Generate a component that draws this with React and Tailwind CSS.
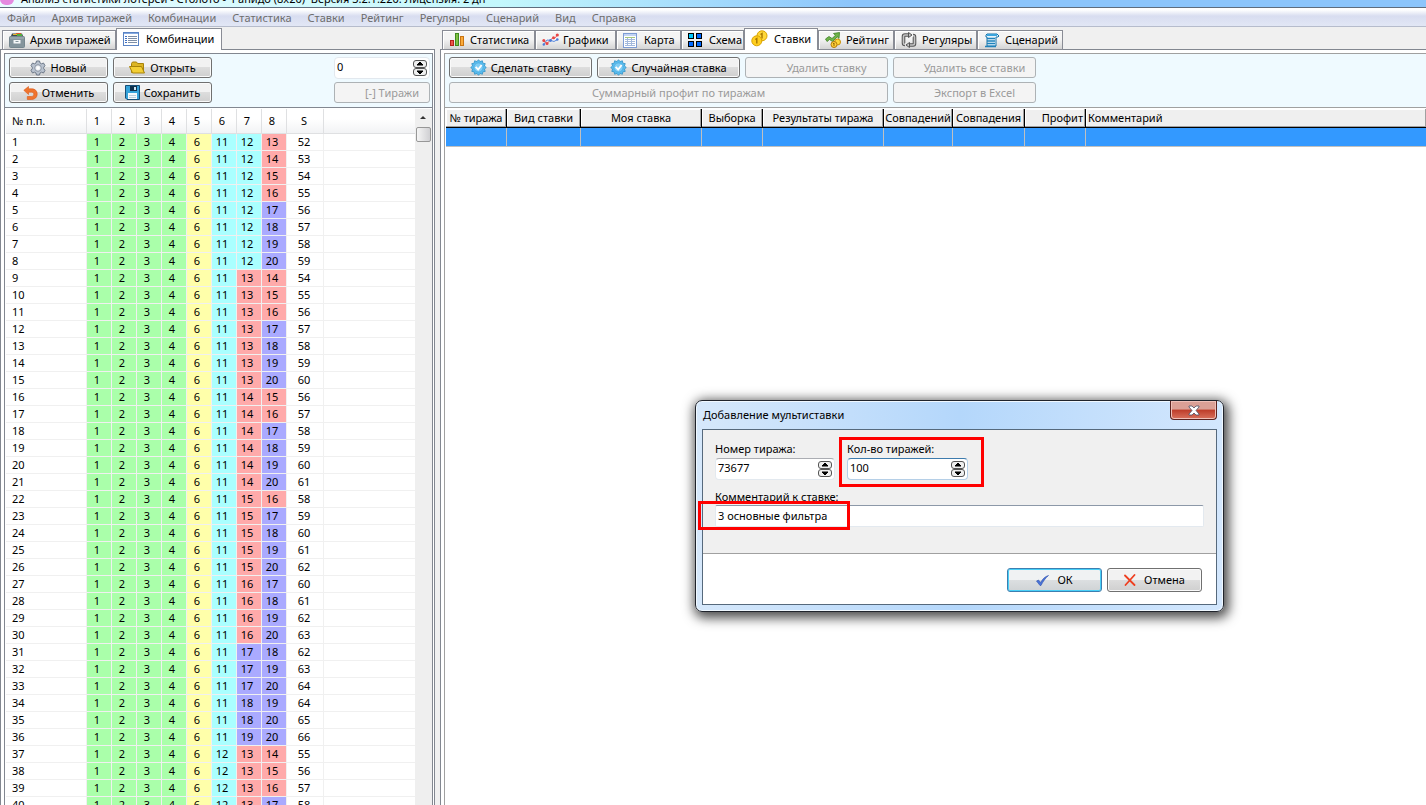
const MENU = ["Файл", "Архив тиражей", "Комбинации", "Статистика", "Ставки", "Рейтинг", "Регуляры", "Сценарий", "Вид", "Справка"];

const LEFT_TABS = [
  { label: "Архив тиражей", icon: ArchiveIcon, width: "w-[114px]" },
  { label: "Комбинации", icon: ListIcon, width: "w-[106px]", active: true },
];

const RIGHT_TABS = [
  { label: "Статистика", icon: BarsIcon, width: "w-[93px]" },
  { label: "Графики", icon: GraphIcon, width: "w-[81px]" },
  { label: "Карта", icon: MapIcon, width: "w-[65px]" },
  { label: "Схема", icon: SchemeIcon, width: "w-[63px]" },
  { label: "Ставки", icon: CoinsIcon, width: "w-[74px]", active: true },
  { label: "Рейтинг", icon: RatingIcon, width: "w-[76px]" },
  { label: "Регуляры", icon: LoopIcon, width: "w-[83px]" },
  { label: "Сценарий", icon: ScriptIcon, width: "w-[86px]" },
];

const BET_COLUMNS = [
  { title: "№ тиража", width: "w-[61px]", align: "text-center" },
  { title: "Вид ставки", width: "w-[74px]", align: "text-center" },
  { title: "Моя ставка", width: "w-[121px]", align: "text-center" },
  { title: "Выборка", width: "w-[61px]", align: "text-center" },
  { title: "Результаты тиража", width: "w-[121px]", align: "text-center" },
  { title: "Совпадений", width: "w-[69px]", align: "text-center" },
  { title: "Совпадения", width: "w-[72px]", align: "text-center" },
  { title: "Профит", width: "w-[61px]", align: "text-right pr-0.5" },
  { title: "Комментарий", width: "", align: "text-left pl-0.5" },
];

const BASE = [1, 2, 3, 4, 6];
const VISIBLE_ROWS = 40;

function buildCombinations() {
  const rows = [];
  for (let a = 11; a <= 12; a++) {
    for (let b = a + 1; b < 20; b++) {
      for (let c = b + 1; c <= 20; c++) rows.push([...BASE, a, b, c]);
    }
  }
  return rows;
}

const COMBINATIONS = buildCombinations().slice(0, VISIBLE_ROWS);

function cellColor(n) {
  if (n <= 5) return "bg-[#aaffaa]";
  if (n <= 10) return "bg-[#ffffaa]";
  if (n <= 12) return "bg-[#aaffff]";
  if (n <= 16) return "bg-[#ffaaaa]";
  return "bg-[#aaaaff]";
}

/* ---------- icons ---------- */

function ArchiveIcon() {
  return (
    <svg width="16" height="16" viewBox="0 0 16 16">
      <path d="M1.500 5l1.500-3.500h10L14.500 5z" fill="#3d4a50" />
      <path d="M4 2h4v1H4z" fill="#e8b92e" />
      <path d="M7 1h5v1H7z" fill="#e05a2b" />
      <path d="M8 2h5v2H8z" fill="#4fae3f" />
      <rect x="0.5" y="4.5" width="15" height="11" rx="1" fill="#84949c" stroke="#75868e" />
      <path d="M1 6h14" stroke="#a9b6bc" />
      <path d="M4.500 8h7v3.500h-7z" fill="#f5f7f8" />
      <path d="M6.500 9h3v1h-3z" fill="#84949c" />
    </svg>
  );
}

function ListIcon() {
  return (
    <svg width="16" height="14" viewBox="0 0 16 14">
      <rect x="0.5" y="0.5" width="15" height="13" fill="#fff" stroke="#5b84c4" />
      <path d="M1 1.5h14" stroke="#86aae0" />
      <path d="M5 4.5h9M5 6.5h9M5 8.5h9M5 10.5h9" stroke="#7d8ea6" />
      <path d="M2 4.5h2M2 6.5h2M2 8.5h2M2 10.5h2" stroke="#3f6fc0" />
    </svg>
  );
}

function BarsIcon() {
  return (
    <svg width="16" height="16" viewBox="0 0 16 16">
      <rect x="1.5" y="8.5" width="3" height="5" fill="#ee5348" stroke="#b5231c" />
      <rect x="6.5" y="1.5" width="3" height="12" fill="#7fc043" stroke="#3f8a1e" />
      <rect x="11.5" y="4.5" width="3" height="9" fill="#fbab3a" stroke="#c87412" />
    </svg>
  );
}

function GraphIcon() {
  return (
    <svg width="17" height="14" viewBox="0 0 17 14">
      <path d="M1.500 11.500L5 7l4 .5 3 1 3.500-2" fill="none" stroke="#5b8be0" />
      <path d="M1.500 7.500L5 10.500 8.500 7l2.500-2.500 1.500 1L15.500 2" fill="none" stroke="#ee5a5a" />
      <g fill="#e84545">
        <circle cx="1.800" cy="7.500" r="1.500" />
        <circle cx="5" cy="10.500" r="1.500" />
        <circle cx="11.500" cy="4.800" r="1.500" />
        <circle cx="15.300" cy="2" r="1.600" />
      </g>
      <g fill="#4a7ad8">
        <circle cx="1.800" cy="11.500" r="1.200" />
        <circle cx="8.500" cy="7.500" r="1.400" />
        <circle cx="15.300" cy="6.500" r="1.300" />
      </g>
    </svg>
  );
}

function MapIcon() {
  return (
    <svg width="14" height="15" viewBox="0 0 14 15">
      <rect x="0.5" y="0.5" width="13" height="14" fill="#fff" stroke="#7d9cd4" />
      <path d="M1 1h12v2H1z" fill="#c3d4f2" />
      <path d="M2 4.5h10" stroke="#a6c77e" />
      <path d="M2 6.5h10M2 8.5h10M2 10.5h10M2 12.5h10M4.5 5v8M8.5 5v8" stroke="#a3b9dc" />
    </svg>
  );
}

function SchemeIcon() {
  return (
    <svg width="15" height="15" viewBox="0 0 15 15" stroke="#000">
      <rect x="0.5" y="0.5" width="5" height="5" fill="#00c8ff" />
      <rect x="8.5" y="0.5" width="5" height="5" fill="#0068ff" />
      <rect x="0.5" y="8.5" width="5" height="5" fill="#0068ff" />
      <rect x="8.5" y="8.5" width="5" height="5" fill="#0068ff" />
    </svg>
  );
}

function CoinsIcon() {
  return (
    <svg width="17" height="17" viewBox="0 0 17 17" stroke="#d9a300">
      <circle cx="11" cy="5.800" r="5" fill="#ffd83a" />
      <path d="M9.500 4.500l1.500-1v5" fill="none" stroke="#a87800" strokeWidth="1.400" />
      <circle cx="5.800" cy="10.800" r="5" fill="#ffce1f" />
      <path d="M4.300 9.500l1.500-1v5" fill="none" stroke="#a87800" strokeWidth="1.400" />
    </svg>
  );
}

function RatingIcon() {
  return (
    <svg width="16" height="16" viewBox="0 0 16 16">
      <path d="M0.500 7l3.500-2.500L7 6.500l3.500-3.200L8.500 1.500 14.500 0.500 14 6.500l-1.700-1.600L7.500 9.500 4.500 7.500 2 9.500z" fill="#6fb54a" stroke="#3d7f25" strokeWidth="0.8" />
      <circle cx="12.500" cy="10" r="3" fill="#ffd83a" stroke="#c98e08" />
      <circle cx="9" cy="12.500" r="3" fill="#ffd03a" stroke="#b07a08" />
      <path d="M8 12l1-1v3" fill="none" stroke="#8f6400" />
    </svg>
  );
}

function LoopIcon() {
  return (
    <svg width="16" height="16" viewBox="0 0 16 16" fill="none">
      <path d="M8 3H4Q2.500 3 2.500 4.500V11Q2.500 12.500 4 12.500M8 13h4q1.500 0 1.500-1.500V5Q13.500 3.500 12 3.500" stroke="#555" strokeWidth="3.600" />
      <path d="M8 3H4Q2.500 3 2.500 4.500V11Q2.500 12.500 4 12.500M8 13h4q1.500 0 1.500-1.500V5Q13.500 3.500 12 3.500" stroke="#c4c4c4" strokeWidth="1.600" />
      <path d="M7.500 0.500l3.500 2.500-3.500 2.500zM8.500 10.500L5 13l3.500 2.500z" fill="#c4c4c4" stroke="#555" />
    </svg>
  );
}

function ScriptIcon() {
  return (
    <svg width="16" height="15" viewBox="0 0 16 15">
      <path d="M3 1h10l2 2-1 1h-2v9H3V4H2V2z" fill="#e8f5fd" stroke="#1672a8" />
      <path d="M3 2h10" stroke="#3aa4dd" strokeWidth="2" />
      <path d="M3 5.500h8M3 8h8M3 10.500h8M1 13.500h11" stroke="#1f82bb" strokeWidth="1.3" />
    </svg>
  );
}

function GearIcon() {
  return (
    <svg width="16" height="16" viewBox="0 0 16 16">
      <path
        d="M6.500 1h3l.5 2 1.500.8L13.500 3 15 5.700 13.700 7.300v1.400L15 10.300 13.500 13l-2-.8-1.500.8-.5 2h-3L6 13l-1.500-.8-2 .8L1 10.300l1.300-1.600V7.300L1 5.700 2.500 3l2 .8L6 3z"
        fill="#b9c2cf"
        stroke="#6f7a8a"
      />
      <circle cx="8" cy="8" r="3.300" fill="#e6eaef" stroke="#8a94a2" />
      <circle cx="8" cy="8" r="1.700" fill="#fff" />
    </svg>
  );
}

function FolderIcon() {
  return (
    <svg width="17" height="13" viewBox="0 0 17 13" stroke="#a8830a">
      <path d="M2.500 11.500v-9l1-1.500h4l1 1.500h6v9z" fill="#dcb524" />
      <path d="M0.500 5.500h12l3 6.500h-12z" fill="#f3cf35" />
    </svg>
  );
}

function UndoIcon() {
  return (
    <svg width="15" height="14" viewBox="0 0 15 14">
      <path d="M0.800 4.300L5.500 0.500v2.300h3.200c3.300 0 5.500 2 5.500 5.200s-2.200 5.500-5.700 5.500H4.300v-3h4c1.600 0 2.500-.9 2.500-2.300 0-1.300-.9-2-2.400-2H5.500v2.300z" fill="#f0742e" stroke="#d9591a" strokeWidth="0.6" />
    </svg>
  );
}

function SaveIcon() {
  return (
    <svg width="15" height="15" viewBox="0 0 15 15">
      <path d="M0.5 0.5h14v14H2l-1.5-1.5z" fill="#35a3da" stroke="#174f78" />
      <rect x="5" y="1" width="7" height="5" fill="#0d2f4a" />
      <rect x="9" y="2" width="2" height="3" fill="#cfe6f4" />
      <rect x="3" y="8" width="9" height="6" fill="#f4fafd" />
      <path d="M4 10.5h7M4 12.5h7" stroke="#bcd0dc" />
    </svg>
  );
}

function BadgeIcon() {
  return (
    <svg width="17" height="17" viewBox="0 0 24 24">
      <path
        d="M12 1l2.200 2.600 3.300-1.100.6 3.400 3.400.6-1.100 3.300L23 12l-2.600 2.200 1.100 3.300-3.400.6-.6 3.400-3.300-1.100L12 23l-2.200-2.600-3.300 1.100-.6-3.400-3.400-.6 1.100-3.300L1 12l2.600-2.200-1.100-3.300 3.400-.6.6-3.400 3.300 1.100z"
        fill="#58bdf0"
        stroke="#3795c8"
        strokeWidth="1.2"
      />
      <circle cx="12" cy="12" r="6.500" fill="#7fcdf5" stroke="#4aa8dc" />
      <path d="M8 11l3.500 4L16.500 8.500" fill="none" stroke="#fff" strokeWidth="2.6" />
    </svg>
  );
}

function CheckIcon() {
  return (
    <svg width="13" height="11" viewBox="0 0 13 11">
      <path d="M0.5 6l2-1 2.200 2.500C6.500 4 9 1.500 12.500 0.500 9.500 3 7 6.500 5 10.500H4z" fill="#4a74d8" stroke="#2f51ad" strokeWidth="0.6" />
    </svg>
  );
}

function CrossIcon() {
  return (
    <svg width="12" height="12" viewBox="0 0 12 12">
      <path d="M1 1.500L10.500 11M10.500 1L1.500 11" stroke="#ee3f20" strokeWidth="1.8" strokeLinecap="round" />
    </svg>
  );
}

/* ---------- controls ---------- */

function Tabs({ items }) {
  return (
    <div role="tablist" className="relative z-10 -mb-px flex items-end pl-0.5">
      {items.map(({ label, icon: Icon, width, active }) => (
        <button
          key={label}
          role="tab"
          aria-selected={!!active}
          className={`${width} flex shrink-0 items-center whitespace-nowrap border-[#898c95] ${
            active
              ? "h-[22px] gap-1.5 border-l border-r border-t bg-white pb-0.5 pl-1.5"
              : "h-5 gap-1 border bg-linear-to-b from-[#f4f4f4] from-45% to-[#d4d4d4] pl-1.5 shadow-[inset_1px_1px_0_#fff]"
          }`}
        >
          <span className="flex w-[17px] shrink-0">
            <Icon />
          </span>
          {label}
        </button>
      ))}
    </div>
  );
}

function ToolButton({ icon: Icon, disabled, className = "", children }) {
  return (
    <button
      disabled={disabled}
      className={`flex h-[21px] items-center justify-center gap-1 whitespace-nowrap rounded-[3px] border ${
        disabled
          ? "border-[#adb2b5] bg-[#f4f4f4] text-[#9a9a9a]"
          : "border-[#707070] bg-linear-to-b from-[#f2f2f2] from-50% via-[#dddddd] via-50% to-[#cfcfcf] text-black shadow-[inset_0_0_0_1px_#fafafa]"
      } ${className}`}
    >
      {Icon && <Icon />}
      {children}
    </button>
  );
}

function SpinInput({ id, value, label, className = "" }) {
  return (
    <div className={`flex h-[22px] items-center rounded-sm border bg-white pr-0.5 ${className}`}>
      <input id={id} aria-label={label} defaultValue={value} className="w-0 min-w-0 flex-1 pb-0.5 pl-0.5 outline-none" />
      <div className="flex flex-col">
        {["M6 1L9 4H3z", "M3 2h6L6 5z"].map((d, i) => (
          <button key={d} aria-label={i ? "Меньше" : "Больше"} className="h-[8px] w-[14px] rounded-[3px] border border-[#555] bg-[#efefef]">
            <svg width="12" height="6" viewBox="0 0 12 6">
              <path d={d} stroke="#000" />
            </svg>
          </button>
        ))}
      </div>
    </div>
  );
}

/* ---------- panels ---------- */

function CombinationsTable() {
  return (
    <div className="flex min-h-0 flex-1 overflow-hidden border-t border-[#828790] bg-white pl-px pt-px">
      <div className="min-w-0 flex-1 overflow-hidden">
        <table className="w-full table-fixed border-separate border-spacing-0">
          <thead>
            <tr className="h-[25px] bg-linear-to-b from-white from-40% to-[#f1f2f4]">
              <th className="w-[81px] border-b border-r border-[#dfe0e2] pl-1.5 text-left font-normal">№ п.п.</th>
              {[1, 2, 3, 4, 5, 6, 7, 8].map((n) => (
                <th key={n} className="w-[25px] border-b border-r border-[#dfe0e2] pr-1 text-center font-normal">{n}</th>
              ))}
              <th className="w-[37px] border-b border-r border-[#dfe0e2] pr-0.5 text-center font-normal">S</th>
              <th className="border-b border-[#dfe0e2]"></th>
            </tr>
          </thead>
          <tbody>
            {COMBINATIONS.map((row, i) => (
              <tr key={i} className="h-[17px]">
                <td className="border-b border-r border-[#f0f0f0] pl-1.5">{i + 1}</td>
                {row.map((n, j) => (
                  <td key={j} className={`border-b border-r border-[#f0f0f0] pr-1 text-center ${cellColor(n)}`}>{n}</td>
                ))}
                <td className="border-b border-r border-[#f0f0f0] pr-0.5 text-center">{row.reduce((s, n) => s + n, 0)}</td>
                <td className="border-b border-[#f0f0f0]"></td>
              </tr>
            ))}
          </tbody>
        </table>
      </div>
      <div className="flex w-[17px] shrink-0 flex-col items-center bg-[#efefef]">
        <svg width="17" height="18" viewBox="0 0 17 18">
          <path d="M5 10l3-3 3 3z" fill="#333" />
        </svg>
        <div className="h-[15px] w-[15px] rounded-xs border border-[#979797] bg-linear-to-r from-[#f5f5f5] to-[#d0d0d3]"></div>
      </div>
    </div>
  );
}

function LeftPanel() {
  return (
    <section className="flex w-[435px] shrink-0 flex-col pt-px">
      <Tabs items={LEFT_TABS} />
      <div className="flex min-h-0 flex-1 flex-col border-l border-r border-t border-[#828790] bg-white pl-[3px] pr-px pt-[3px]">
        <div className="flex min-h-0 flex-1 flex-col border-l border-r border-t border-[#828790] bg-[#effaff]">
          <div className="flex justify-between pb-1 pl-1 pr-0.5 pt-[3px]">
            <div className="grid grid-cols-[repeat(2,99px)] gap-x-[5px] gap-y-1">
              <ToolButton icon={GearIcon}>Новый</ToolButton>
              <ToolButton icon={FolderIcon}>Открыть</ToolButton>
              <ToolButton icon={UndoIcon}>Отменить</ToolButton>
              <ToolButton icon={SaveIcon}>Сохранить</ToolButton>
            </div>
            <div className="flex w-24 flex-col gap-[3px]">
              <SpinInput value="0" label="Тиражи" className="border-[#e2e8ee]" />
              <ToolButton disabled className="pl-5">[-] Тиражи</ToolButton>
            </div>
          </div>
          <CombinationsTable />
        </div>
      </div>
    </section>
  );
}

function BetsTable() {
  return (
    <div className="min-h-0 flex-1 border-t border-[#a0a0a0] bg-white pl-px pt-px">
      <table className="w-full table-fixed border-separate border-spacing-0">
        <thead>
          <tr className="h-[19px]">
            {BET_COLUMNS.map(({ title, width, align }) => (
              <th
                key={title}
                className={`${width} ${align} whitespace-nowrap border-b border-r border-black bg-[#efefef] font-normal shadow-[inset_-1px_-1px_0_#a0a0a0,inset_1px_1px_0_#fff] last:border-r-0`}
              >
                {title}
              </th>
            ))}
          </tr>
        </thead>
        <tbody>
          <tr className="h-[19px] bg-[#3399ff]">
            {BET_COLUMNS.map(({ title }) => (
              <td key={title} className="border-b border-r border-[#c0c0c0] last:border-r-0"></td>
            ))}
          </tr>
        </tbody>
      </table>
    </div>
  );
}

function RightPanel() {
  return (
    <section className="flex min-w-0 flex-1 flex-col pt-px">
      <Tabs items={RIGHT_TABS} />
      <div className="flex min-h-0 flex-1 flex-col border-l border-t border-[#828790] bg-white pl-[3px] pt-[3px]">
        <div className="flex min-h-0 flex-1 flex-col border-l border-t border-[#a0a0a0] bg-[#effaff]">
          <div className="grid grid-cols-[repeat(4,143px)] gap-x-[5px] gap-y-1 px-1 pb-1 pt-[3px]">
            <ToolButton icon={BadgeIcon}>Сделать ставку</ToolButton>
            <ToolButton icon={BadgeIcon}>Случайная ставка</ToolButton>
            <ToolButton disabled className="pl-5">Удалить ставку</ToolButton>
            <ToolButton disabled className="pl-5">Удалить все ставки</ToolButton>
            <ToolButton disabled className="col-span-3 pl-5">Суммарный профит по тиражам</ToolButton>
            <ToolButton disabled className="pl-5">Экспорт в Excel</ToolButton>
          </div>
          <BetsTable />
        </div>
      </div>
    </section>
  );
}

function MultiBetDialog() {
  return (
    <div
      role="dialog"
      aria-label="Добавление мультиставки"
      className="absolute left-[695px] top-[400px] w-[529px] rounded-[7px] border border-[#20242c] bg-linear-to-r from-[#d6e8fb] via-[#b4d7fb] via-50% to-[#d3e7fd] px-1.5 pb-1.5 shadow-[inset_0_0_0_1px_#f0f8ff,2px_3px_12px_3px_rgba(0,0,0,0.7)]"
    >
      <div className="flex h-7 items-start justify-between">
        <h2 className="pl-px pt-1.5 leading-4">Добавление мультиставки</h2>
        <button
          aria-label="Закрыть"
          className="flex h-[19px] w-[47px] items-center justify-center rounded-b-[4px] border border-t-0 border-[#5a2320] bg-linear-to-b from-[#dba096] from-45% via-[#bd3c29] via-50% to-[#d9705c] shadow-[inset_0_0_0_1px_#efc0b8]"
        >
          <svg width="12" height="11" viewBox="0 0 12 11">
            <path d="M1 1h3l2 2 2-2h3v1L8 5.500 11 9v1H8L6 8l-2 2H1V9l3-3.500L1 2z" fill="#fff" stroke="#4b4f63" strokeWidth="0.8" />
          </svg>
        </button>
      </div>
      <form className="border border-[#56697c] bg-white" onSubmit={(e) => e.preventDefault()}>
        <div className="border-b border-[#a0a0a0] bg-[#f0f0f0] px-3 pb-[26px] pt-[11px]">
          <div className="flex gap-3">
            <div className="w-[120px]">
              <label htmlFor="draw" className="mb-px block leading-4">Номер тиража:</label>
              <SpinInput id="draw" value="73677" className="border-[#e3e9ef] border-t-[#abadb3]" />
            </div>
            <div className="w-[121px]">
              <label htmlFor="count" className="mb-px block leading-4">Кол-во тиражей:</label>
              <SpinInput id="count" value="100" className="border-[#b5cfe7] border-t-[#3d7bad]" />
            </div>
          </div>
          <label htmlFor="comment" className="mt-[9px] block leading-4">Комментарий к ставке:</label>
          <input
            id="comment"
            defaultValue="3 основные фильтра"
            className="block h-[22px] w-full rounded-xs border border-[#e3e9ef] border-t-[#8c98a8] bg-white pb-0.5 pl-0.5 outline-none"
          />
        </div>
        <div className="flex justify-end gap-[5px] px-3.5 pb-3 pt-3.5">
          <button className="flex h-6 w-[95px] items-center justify-center gap-2 rounded-[3px] border border-[#3c7fb1] bg-linear-to-b from-[#f0f2f3] from-50% via-[#dcdfe1] via-50% to-[#cfd3d5] shadow-[inset_0_0_0_1px_#48d0f8]">
            <CheckIcon />
            ОК
          </button>
          <button className="flex h-6 w-[95px] items-center justify-center gap-2 rounded-[3px] border border-[#707070] bg-linear-to-b from-[#f2f2f2] from-50% via-[#dddddd] via-50% to-[#cfcfcf] shadow-[inset_0_0_0_1px_#fafafa]">
            <CrossIcon />
            Отмена
          </button>
        </div>
      </form>
      {/* highlight frames around the fields to fill in */}
      <div className="pointer-events-none absolute left-[143px] top-[36px] h-[50px] w-[145px] border-3 border-[#ff0000]"></div>
      <div className="pointer-events-none absolute left-[2px] top-[100px] h-[29px] w-[152px] border-3 border-[#ff0000]"></div>
    </div>
  );
}

export default function App() {
  return (
    <div className="relative flex h-screen flex-col overflow-hidden bg-[#f0f0f0] font-['Noto_Sans',sans-serif] text-[11px] leading-4 text-black">
      <header className="flex h-2 shrink-0 items-end gap-[7px] overflow-hidden border-b border-[#5f6d7d] bg-linear-to-r from-[#e9fcff] via-[#c4f8fc] via-35% to-[#8cc5fb] to-60% pb-0.5">
        <span className="h-3 w-3.5 shrink-0 rounded-full bg-[#e58ae0]"></span>
        <span className="whitespace-pre leading-3">
          {"Анализ статистики лотерей - Столото -  Рапидо (8x20)  Версия 3.2.1.220. Лицензия: 2 дн"}
        </span>
      </header>

      <nav className="flex h-[19px] shrink-0 items-center gap-4 border-b border-[#b6bccc] bg-linear-to-b from-white from-10% via-[#d8ddf0] via-45% to-[#e2e7f5] px-[7px] pt-0.5 text-[#6d6d6d]">
        {MENU.map((item) => (
          <a key={item} href="#" className="whitespace-nowrap">{item}</a>
        ))}
      </nav>

      <main className="flex min-h-0 flex-1 gap-[5px]">
        <LeftPanel />
        <RightPanel />
      </main>

      <MultiBetDialog />
    </div>
  );
}
